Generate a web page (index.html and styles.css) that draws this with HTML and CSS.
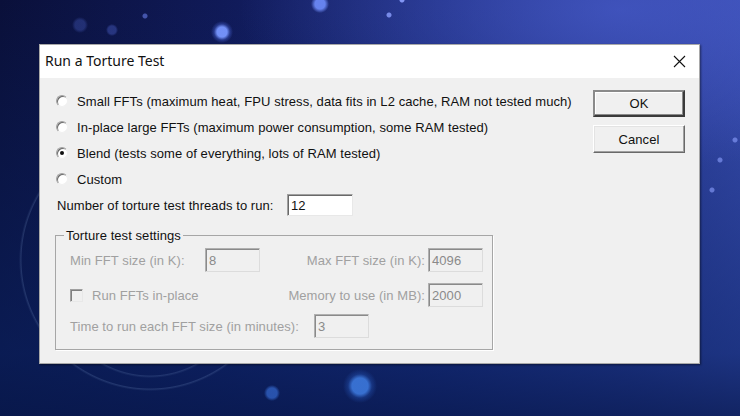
FILE: index.html
```html
<!DOCTYPE html>
<html>
<head>
<meta charset="utf-8">
<link rel="stylesheet" href="styles.css">
</head>
<body>
<div class="dialog">
  <div class="titlebar">
    <span class="title">Run a Torture Test</span>
    <svg class="close" width="13" height="13" viewBox="0 0 13 13"><path d="M1 1 L12 12 M12 1 L1 12" stroke="#111" stroke-width="1.1" fill="none"/></svg>
  </div>
  <div class="content">
    <div class="main">
      <div class="row"><span class="radio"></span><span>Small FFTs (maximum heat, FPU stress, data fits in L2 cache, RAM not tested much)</span></div>
      <div class="row"><span class="radio"></span><span>In-place large FFTs (maximum power consumption, some RAM tested)</span></div>
      <div class="row"><span class="radio checked"></span><span>Blend (tests some of everything, lots of RAM tested)</span></div>
      <div class="row"><span class="radio"></span><span>Custom</span></div>
      <div class="row threads"><span class="threads-label">Number of torture test threads to run:</span><span class="input threads-input">12</span></div>
      <fieldset class="group">
        <legend>Torture test settings</legend>
        <div class="grow r1">
          <span class="lbl left-lbl">Min FFT size (in K):</span>
          <span class="input dis small">8</span>
          <span class="lbl right-lbl">Max FFT size (in K):</span>
          <span class="input dis small">4096</span>
        </div>
        <div class="grow r2">
          <span class="check"></span>
          <span class="lbl check-lbl">Run FFTs in-place</span>
          <span class="lbl right-lbl">Memory to use (in MB):</span>
          <span class="input dis small">2000</span>
        </div>
        <div class="grow r3">
          <span class="lbl time-lbl">Time to run each FFT size (in minutes):</span>
          <span class="input dis small">3</span>
        </div>
      </fieldset>
    </div>
    <div class="buttons">
      <div class="btn default">OK</div>
      <div class="btn">Cancel</div>
    </div>
  </div>
</div>
</body>
</html>
```

FILE: styles.css
```css
html, body {
  margin: 0;
  padding: 0;
}
body {
  width: 740px;
  height: 416px;
  overflow: hidden;
  font-family: "Liberation Sans", Arial, sans-serif;
  font-size: 13px;
  letter-spacing: 0.07px;
  color: #111;
  background:
    radial-gradient(circle at 222px 32px, rgba(120,150,255,0.95) 0 5px, rgba(80,110,230,0.35) 8px, transparent 11px),
    radial-gradient(circle at 320px 4px, rgba(110,140,250,0.9) 0 5px, transparent 9px),
    radial-gradient(circle at 80px 25px, rgba(60,80,170,0.45) 0 5px, transparent 8px),
    radial-gradient(circle at 145px 16px, rgba(90,110,210,0.7) 0 2px, transparent 3px),
    radial-gradient(circle at 112px 30px, rgba(70,90,190,0.45) 0 4px, transparent 6px),
    radial-gradient(circle at 402px 0px, rgba(140,160,255,0.9) 0 2px, transparent 3px),
    radial-gradient(circle at 389px 15px, rgba(140,160,255,0.8) 0 2px, transparent 3px),
    radial-gradient(circle at 720px 160px, rgba(140,160,255,0.6) 0 2px, transparent 3px),
    radial-gradient(circle at 712px 190px, rgba(140,160,255,0.6) 0 2px, transparent 3px),
    radial-gradient(circle at 735px 140px, rgba(140,160,255,0.6) 0 2px, transparent 3px),
    radial-gradient(circle at 360px 386px, rgba(60,120,220,0.9) 0 8px, rgba(40,90,190,0.35) 12px, transparent 17px),
    radial-gradient(circle at 272px 393px, rgba(50,100,200,0.75) 0 5px, transparent 8px),
    radial-gradient(circle at 279px 353px, rgba(60,110,210,0.8) 0 2px, transparent 4px),
    radial-gradient(circle at 150px 260px, transparent 128px, rgba(120,150,200,0.22) 129px, transparent 131px),
    radial-gradient(circle at 150px 280px, transparent 95px, rgba(120,150,200,0.2) 96px, transparent 98px),
    radial-gradient(ellipse 380px 160px at 620px 10px, rgba(70,90,200,0.75), transparent 100%),
    linear-gradient(180deg, rgba(8,16,60,0) 0%, rgba(10,35,100,0.6) 85%, rgba(8,26,80,0.8) 100%),
    linear-gradient(90deg, #0a103a 0%, #101a58 30%, #1b2a7a 60%, #2c3d98 85%, #3a4db0 100%);
}

.dialog {
  box-sizing: border-box;
  margin: 44px 0 0 39px;
  width: 661px;
  height: 320px;
  background: #f0f0f0;
  border: 1px solid #a8a8a8;
  box-shadow: 1px 1px 2px rgba(0,0,0,0.45);
  display: flex;
  flex-direction: column;
}

.titlebar {
  height: 33px;
  background: #fff;
  display: flex;
  align-items: center;
  justify-content: space-between;
  padding: 0 13px 0 5px;
  flex: none;
}
.title {
  font-family: "Noto Sans", "Open Sans", sans-serif;
  font-size: 14px;
  letter-spacing: 0;
  color: #111;
  margin-top: -2px;
}
.close {
  display: block;
}

.content {
  flex: 1;
  display: flex;
  padding: 10px 14px 15px 15px;
}

.main {
  flex: 1;
  display: flex;
  flex-direction: column;
}

.row {
  height: 26px;
  display: flex;
  align-items: center;
  white-space: nowrap;
}

.radio {
  box-sizing: border-box;
  width: 12px;
  height: 12px;
  border-radius: 50%;
  background: #fff;
  border: 1px solid;
  border-color: #a0a0a0 #f0f0f0 #f0f0f0 #a0a0a0;
  box-shadow: inset 1px 1px 0 #6a6a6a;
  margin: 0 9px 0 1px;
  position: relative;
  flex: none;
}
.radio.checked::after {
  content: "";
  position: absolute;
  left: 3px;
  top: 3px;
  width: 4px;
  height: 4px;
  border-radius: 50%;
  background: #111;
}

.threads-label {
  width: 230px;
  padding-left: 2px;
}

.input {
  box-sizing: border-box;
  display: flex;
  align-items: center;
  padding-left: 3px;
  border: 1px solid;
  border-color: #a0a0a0 #e8e8e8 #e8e8e8 #a0a0a0;
  box-shadow: inset 1px 1px 0 #696969;
  font-size: 13px;
}
.threads-input {
  width: 66px;
  height: 22px;
  background: #fff;
  color: #111;
}
.input.dis {
  background: #f0f0f0;
  color: #8a8a8a;
  border-color: #b0b0b0 #dcdcdc #dcdcdc #b0b0b0;
  box-shadow: inset 1px 1px 0 #8a8a8a;
}
.input.small {
  width: 55px;
  height: 24px;
}

.group {
  box-sizing: border-box;
  width: 438px;
  margin: 10px 0 0 0;
  padding: 5px 9px 11px 14px;
  border: 1px solid #a6a6a6;
  box-shadow: 1px 1px 0 #fff;
}
.group legend {
  padding: 0 2px;
  margin-left: -6px;
  line-height: 15px;
  color: #111;
}

.grow {
  display: flex;
  align-items: center;
  white-space: nowrap;
}
.lbl {
  color: #a0a0a0;
}
.left-lbl {
  width: 135px;
}
.right-lbl {
  flex: 1;
  text-align: right;
  padding-right: 3px;
}
.r2 {
  margin-top: 11px;
}
.r3 {
  margin-top: 7px;
}
.check {
  box-sizing: border-box;
  width: 13px;
  height: 13px;
  background: #f0f0f0;
  border: 1px solid;
  border-color: #a0a0a0 #e8e8e8 #e8e8e8 #a0a0a0;
  box-shadow: inset 1px 1px 0 #808080;
  margin-right: 9px;
}
.time-lbl {
  width: 244px;
}

.buttons {
  width: 92px;
  display: flex;
  flex-direction: column;
  padding-top: 2px;
  gap: 8px;
}
.btn {
  box-sizing: border-box;
  height: 28px;
  display: flex;
  align-items: center;
  justify-content: center;
  background: #f0f0f0;
  border: 1px solid;
  border-color: #fff #696969 #696969 #fff;
  box-shadow: inset -1px -1px 0 #a0a0a0, inset 1px 1px 0 #e3e3e3;
  font-size: 13px;
  color: #111;
}
.btn.default {
  height: 27px;
  border: 2px solid;
  border-color: #8a8a8a #3a3a3a #3a3a3a #8a8a8a;
  box-shadow: inset -1px -1px 0 #8a8a8a, inset 1px 1px 0 #fff;
}
```
